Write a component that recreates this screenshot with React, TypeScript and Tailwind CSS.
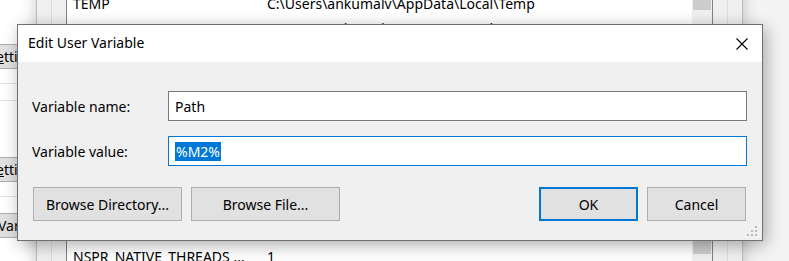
import React from "react";

const font = { fontFamily: '"Noto Sans", "Open Sans", sans-serif' };

function LeftButton({ text, underline, pad }: { text: string; underline?: boolean; pad: string }) {
  return (
    <div
      className={
        "ml-[-60px] w-[80px] h-[25px] bg-[#e1e1e1] border border-[#adadad] flex items-center text-[14px] text-black whitespace-nowrap " +
        pad
      }
    >
      {underline ? (
        <span>
          <span className="underline">e</span>
          {text.slice(1)}
        </span>
      ) : (
        <span>{text}</span>
      )}
    </div>
  );
}

function Btn({ children, w, primary }: { children: React.ReactNode; w: string; primary?: boolean }) {
  return (
    <button
      className={
        "h-[34px] bg-[#e1e1e1] text-[14px] text-black " +
        w +
        (primary ? " border-2 border-[#0078d7]" : " border border-[#adadad]")
      }
    >
      {children}
    </button>
  );
}

function ListRow({ name, value }: { name: string; value: string }) {
  return (
    <div className="flex h-[22px] items-center text-[14px] whitespace-nowrap">
      <span className="w-[200px] pl-[6px]">{name}</span>
      <span>{value}</span>
    </div>
  );
}

export default function App() {
  return (
    <div className="relative w-[789px] h-[261px] overflow-hidden bg-[#f4f4f4] text-black" style={font}>
      {/* System Properties window (left, behind) */}
      <div className="absolute left-0 top-0 w-[60px] h-[261px] bg-white flex flex-col">
        <div className="h-[44px]" />
        <LeftButton text="ettin" underline pad="pl-[55px]" />
        <div className="h-[14px]" />
        <div className="h-px bg-[#e3e3e3]" />
        <div className="h-[16px]" />
        <div className="h-px bg-[#e3e3e3]" />
        <div className="h-[56px]" />
        <LeftButton text="ettin" underline pad="pl-[55px]" />
        <div className="h-[14px]" />
        <div className="h-px bg-[#e3e3e3]" />
        <div className="h-[16px]" />
        <LeftButton text="Var" pad="pl-[57px]" />
      </div>

      {/* Environment Variables window */}
      <div className="absolute left-[36px] top-[-20px] w-[707px] h-[300px] bg-[#f0f0f0] border-l border-r border-[#bdbdbd] shadow-[0_0_14px_rgba(0,0,0,0.22)] flex">
        <div className="w-[15px] border-r border-[#dcdcdc]" />
        <div className="w-[14px]" />
        {/* list view */}
        <div className="w-[647px] h-full bg-white border-l border-r border-[#828282] flex">
          <div className="flex-1 flex flex-col justify-between pt-[12px] pb-[13px]">
            <div className="flex flex-col">
              <ListRow name="TEMP" value="C:\Users\ankumalv\AppData\Local\Temp" />
              <div className="h-[3px]" />
              <ListRow name="TMP" value="C:\Users\ankumalv\AppData\Local\Temp" />
            </div>
            <ListRow name="NSPR_NATIVE_THREADS ..." value="1" />
          </div>
          {/* scrollbar */}
          <div className="w-[20px] h-full bg-[#f0f0f0] flex flex-col justify-between px-px">
            <div className="h-[30px] bg-[#cdcdcd]" />
            <div className="h-[14px] bg-[#cdcdcd] mb-[26px]" />
          </div>
        </div>
        <div className="w-[15px] border-r border-[#dcdcdc]" />
      </div>

      {/* Edit User Variable dialog */}
      <div className="absolute left-[17px] top-[24px] w-[746px] h-[217px] border border-[#707070] bg-[#f0f0f0] flex flex-col shadow-[3px_4px_16px_rgba(0,0,0,0.32)]">
        <div className="h-[37px] bg-white flex items-center justify-between pl-[10px] pr-[14px] shrink-0">
          <span className="text-[14px] leading-none pb-[1px]">Edit User Variable</span>
          <svg width="12" height="12" viewBox="0 0 12 12" className="mt-[1px]">
            <path d="M0.5 0.5 L11.5 11.5 M11.5 0.5 L0.5 11.5" stroke="#000" strokeWidth="1.1" fill="none" />
          </svg>
        </div>
        <div className="relative flex-1 flex flex-col pl-[14px] pr-[15px] pt-[29px]">
          <div className="flex items-center h-[30px]">
            <span className="w-[136px] text-[14px]">Variable name:</span>
            <div className="flex-1 h-[30px] bg-white border border-[#7a7a7a] flex items-center pl-[6px] text-[14px]">
              Path
            </div>
          </div>
          <div className="flex items-center h-[30px] mt-[15px]">
            <span className="w-[136px] text-[14px]">Variable value:</span>
            <div className="flex-1 h-[30px] bg-white border border-[#0078d7] flex items-center pl-[6px] text-[14px]">
              <span className="bg-[#0078d7] text-white leading-[19px] px-px">%M2%</span>
            </div>
          </div>
          <div className="flex items-center mt-[21px] pl-px pr-px gap-[9px]">
            <Btn w="w-[149px]">Browse Directory...</Btn>
            <Btn w="w-[149px]">Browse File...</Btn>
            <div className="flex-1" />
            <Btn w="w-[99px]" primary>
              OK
            </Btn>
            <Btn w="w-[99px]">Cancel</Btn>
          </div>
          {/* resize grip */}
          <svg className="absolute right-[3px] bottom-[2px]" width="12" height="12" viewBox="0 0 12 12">
            <rect x="8" y="0" width="2" height="2" fill="#b9b9b9" />
            <rect x="4" y="4" width="2" height="2" fill="#b9b9b9" />
            <rect x="8" y="4" width="2" height="2" fill="#b9b9b9" />
            <rect x="0" y="8" width="2" height="2" fill="#b9b9b9" />
            <rect x="4" y="8" width="2" height="2" fill="#b9b9b9" />
            <rect x="8" y="8" width="2" height="2" fill="#b9b9b9" />
          </svg>
        </div>
      </div>
    </div>
  );
}
